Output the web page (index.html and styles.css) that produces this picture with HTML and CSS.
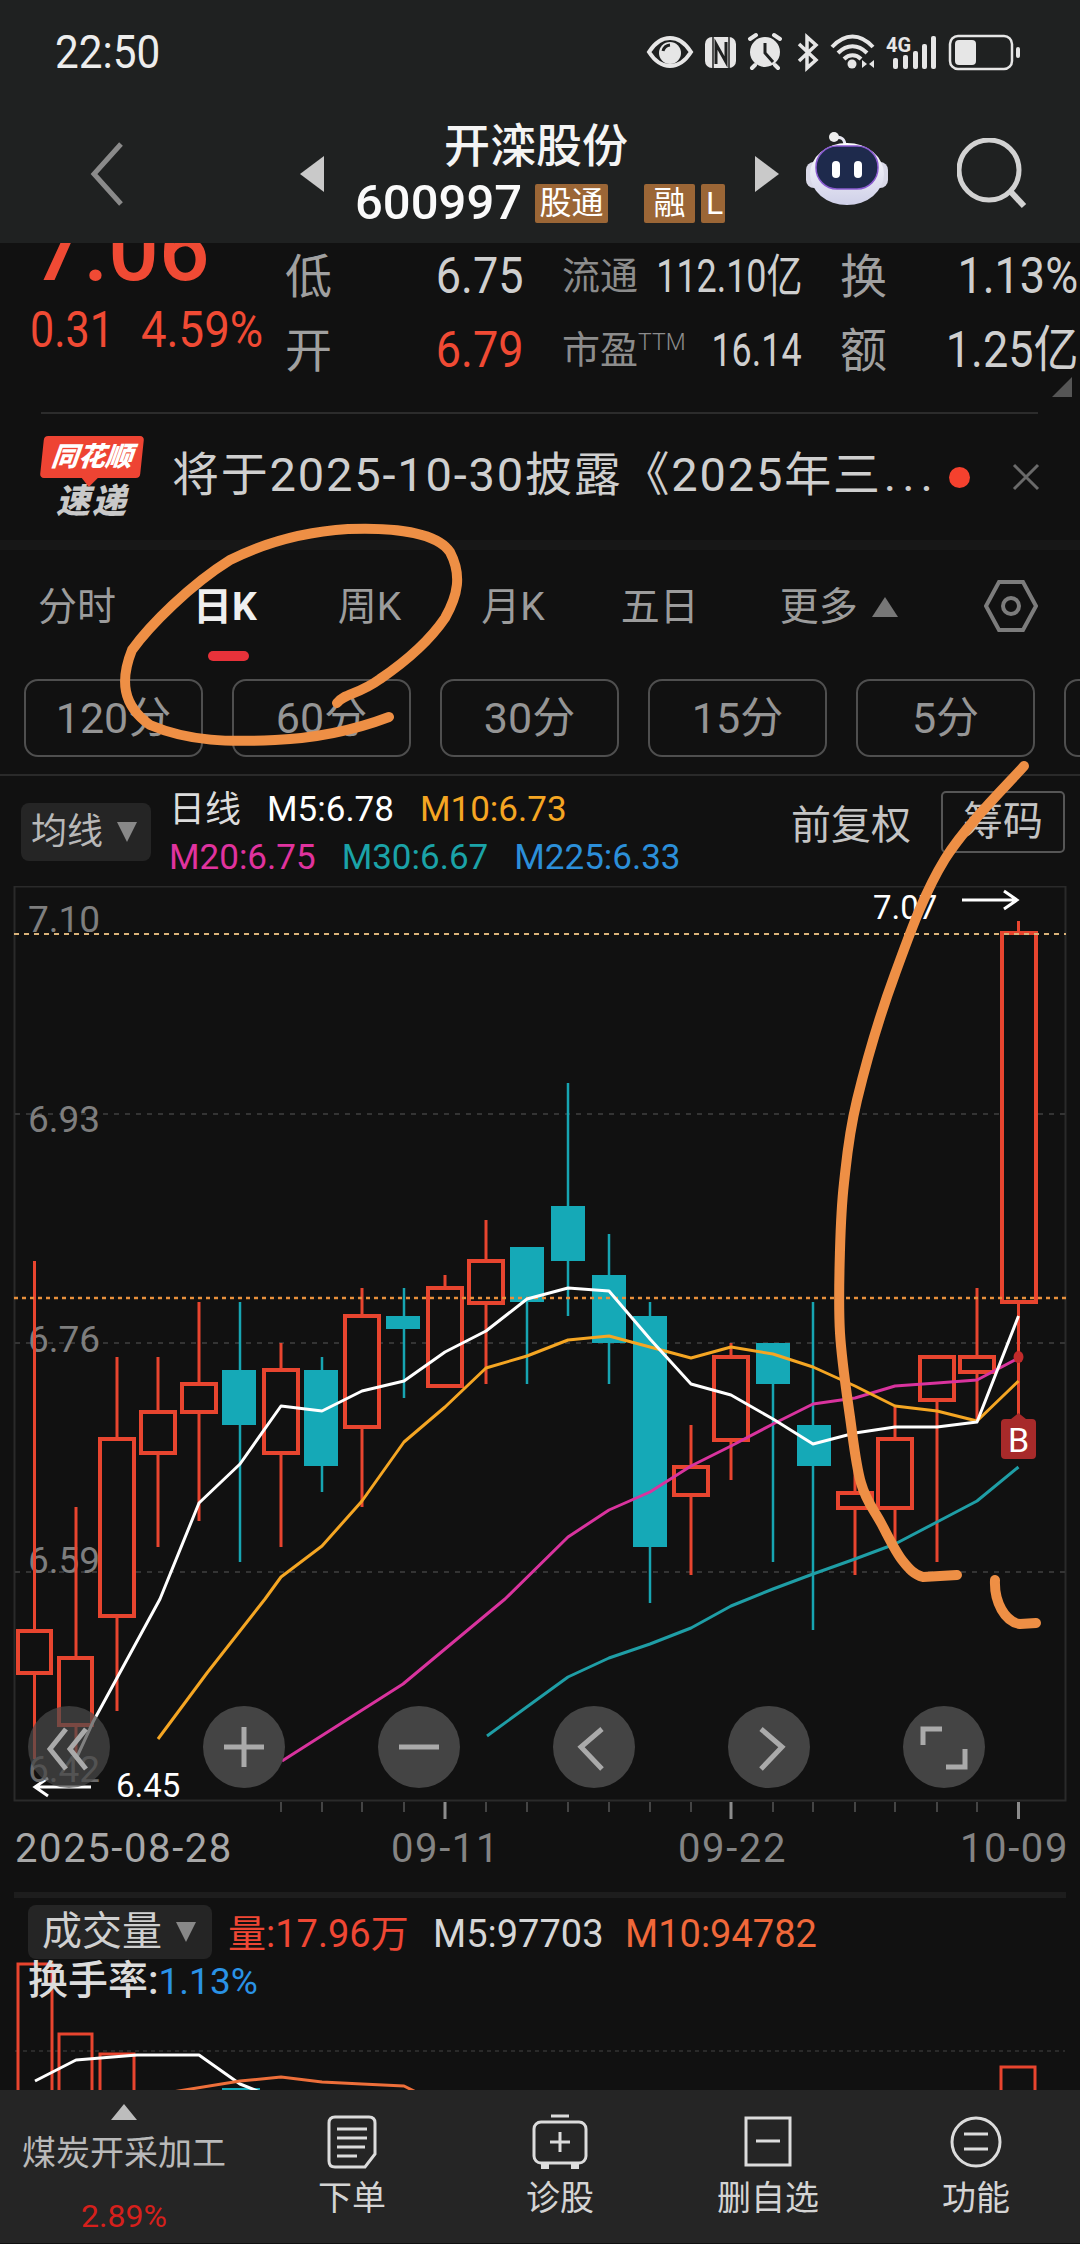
FILE: index.html
```html
<!DOCTYPE html>
<html lang="zh">
<head>
<meta charset="utf-8">
<title>开滦股份</title>
<link rel="stylesheet" href="styles.css">
</head>
<body>
<div class="page">
  <header class="top">
    <div class="status">
      <span class="time">22:50</span>
      <svg class="status-icons" width="390" height="44" viewBox="640 28 390 44">
        <g fill="none" stroke="#e6e6e6" stroke-width="4">
          <path d="M649 50 C656 39 664 36 670 36 C676 36 684 39 691 50 C684 61 676 64 670 64 C664 64 656 61 649 50Z"/>
          <path d="M799 42L816 58L807 66V35L816 43L799 59" stroke-width="3.5"/>
          <path d="M832 45C845 31 860 31 873 45M838 51C847 42 858 42 867 51M844 57C849 52 856 52 861 57" stroke-width="4"/>
          <rect x="950" y="34" width="62" height="33" rx="8" stroke-width="2.5"/>
          <path d="M750 37L756 33M780 37L774 33M755 63L752 66M775 63L778 66" stroke-width="4" stroke-linecap="round"/>
        </g>
        <g fill="#e6e6e6">
          <circle cx="670" cy="51" r="11"/>
          <rect x="705" y="35" width="31" height="31" rx="7"/>
          <circle cx="765" cy="50" r="15"/>
          <circle cx="852" cy="62" r="4.5"/>
          <path d="M862 58l5 4-5 4zM874 58l-5 4 5 4z"/>
          <text class="st-4g" x="886" y="50">4G</text>
          <rect x="893" y="56" width="5" height="11" rx="2"/>
          <rect x="903" y="53" width="5" height="14" rx="2"/>
          <rect x="913" y="49" width="5" height="18" rx="2"/>
          <rect x="922" y="42" width="5" height="25" rx="2"/>
          <rect x="931" y="34" width="5" height="33" rx="2"/>
          <rect x="955" y="38" width="21" height="25" rx="4"/>
          <rect x="1016" y="45" width="4" height="11" rx="2"/>
        </g>
        <g fill="none" stroke="#1f2121">
          <path d="M663 49A8 8 0 0 1 670 43" stroke-width="3"/>
          <path d="M716 62V42L726 60V40" stroke-width="3"/>
          <path d="M713 35V66M729 35V66" stroke-width="1.5"/>
          <path d="M765 41V51L773 60" stroke-width="3"/>
        </g>
      </svg>
    </div>
    <div class="titlebar">
      <svg class="back" width="40" height="66" viewBox="0 0 40 66"><path d="M33 3L6 33L33 63" fill="none" stroke="#8a8a8a" stroke-width="5"/></svg>
      <svg class="tri-l" width="24" height="36" viewBox="0 0 24 36"><path d="M24 0V36L0 18Z" fill="#c9c9c9"/></svg>
      <div class="title">
        <div class="name">开滦股份</div>
        <div class="code-row">
          <span class="code">600997</span>
          <span class="badge badge-gt">股通</span>
          <span class="badge badge-r">融</span>
          <span class="badge badge-l">L</span>
        </div>
      </div>
      <svg class="tri-r" width="24" height="36" viewBox="0 0 24 36"><path d="M0 0V36L24 18Z" fill="#c9c9c9"/></svg>
      <svg class="robot" width="84" height="74" viewBox="0 0 84 74">
        <defs><linearGradient id="rg" x1="0" y1="0" x2="0" y2="1"><stop offset="0" stop-color="#fff"/><stop offset="1" stop-color="#cfd0e8"/></linearGradient></defs>
        <path d="M30 6C36 4 40 7 40 14" fill="none" stroke="#e8e8f2" stroke-width="3"/>
        <circle cx="29" cy="5" r="5" fill="#eeeeee"/>
        <rect x="1" y="30" width="82" height="26" rx="8" fill="#d9d9e8"/>
        <ellipse cx="42" cy="42" rx="37" ry="31" fill="url(#rg)"/>
        <rect x="11" y="14" width="62" height="43" rx="21" fill="#1e2a4c" stroke="#8a5bd0" stroke-width="1.5"/>
        <rect x="27" y="29" width="8" height="17" rx="4" fill="#fff"/>
        <rect x="49" y="29" width="8" height="17" rx="4" fill="#fff"/>
      </svg>
      <svg class="search" width="72" height="72" viewBox="0 0 72 72"><circle cx="32" cy="32" r="30" fill="none" stroke="#d2d2d2" stroke-width="5"/><path d="M54 54L67 68" stroke="#d2d2d2" stroke-width="6"/></svg>
    </div>
  </header>

  <section class="quote">
    <div class="price-col">
      <div class="price">7.06</div>
      <div class="change"><span>0.31</span><span>4.59%</span></div>
    </div>
    <div class="qgrid">
      <span class="q-l">低</span><span class="q-v">6.75</span>
      <span class="q-m">流通</span><span class="q-n">112.10亿</span>
      <span class="q-l q-l2">换</span><span class="q-v">1.13%</span>
      <span class="q-l">开</span><span class="q-v q-red">6.79</span>
      <span class="q-m">市盈<sup class="ttm">TTM</sup></span><span class="q-n">16.14</span>
      <span class="q-l q-l2">额</span><span class="q-v">1.25亿</span>
    </div>
    <div class="corner"></div>
  </section>
  <div class="rule"></div>

  <section class="news">
    <div class="logo">
      <div class="logo-top"><span>同花顺</span></div>
      <div class="logo-bot">速递</div>
    </div>
    <div class="news-text">将于2025-10-30披露《2025年三<span class="ell">...</span></div>
    <span class="dot"></span>
    <svg class="close" width="28" height="28" viewBox="0 0 28 28"><path d="M2 2L26 26M26 2L2 26" stroke="#6a6a6a" stroke-width="3"/></svg>
  </section>
  <div class="band"></div>

  <nav class="tabs">
    <span class="tab">分时</span>
    <span class="tab tab-on">日K</span>
    <span class="tab tab-w">周K</span>
    <span class="tab tab-m">月K</span>
    <span class="tab tab-wide">五日</span>
    <span class="tab tab-more">更多<i class="tri-up"></i></span>
    <svg class="hex" width="54" height="54" viewBox="0 0 54 54"><path d="M15 3H39L52 27L39 51H15L2 27Z" fill="none" stroke="#7c7c7c" stroke-width="4"/><circle cx="27" cy="27" r="8" fill="none" stroke="#7c7c7c" stroke-width="4"/></svg>
  </nav>
  <div class="subtabs">
    <span class="chip">120分</span>
    <span class="chip">60分</span>
    <span class="chip">30分</span>
    <span class="chip">15分</span>
    <span class="chip">5分</span>
    <span class="chip"></span>
  </div>

  <section class="legend">
    <div class="drop"><span>均线</span><i class="tri-down"></i></div>
    <div class="lg-lines">
      <div class="lg-row"><span class="lg-cn">日线</span><span class="c-w">M5:6.78</span><span class="c-y">M10:6.73</span></div>
      <div class="lg-row"><span class="c-m">M20:6.75</span><span class="c-t">M30:6.67</span><span class="c-b">M225:6.33</span></div>
    </div>
    <span class="fq">前复权</span>
    <span class="cm">筹码</span>
  </section>

  <svg class="chart" width="1080" height="1006" viewBox="0 887 1080 1006">
    <rect class="frame" x="14.5" y="887.5" width="1051" height="914"/>
    <path class="grid" d="M15 1115H1065M15 1344H1065M15 1573H1065"/>
    <text class="yl" x="28" y="933">7.10</text>
    <text class="yl" x="28" y="1133">6.93</text>
    <text class="yl" x="28" y="1353">6.76</text>
    <text class="yl" x="28" y="1574">6.59</text>

    <g class="wk-r">
      <path d="M34.5 1262V1760M76 1508V1760M117 1358V1712M158 1358V1548M199 1303V1522M281 1344V1548M362 1289V1508M445 1276V1288M486 1221V1385M691 1426V1576M731 1344V1481M855 1440V1576M895 1408V1548M937 1357V1563M977 1289V1422M1018.5 922V1440"/>
    </g>
    <g class="wk-g">
      <path d="M240 1303V1563M322 1358V1493M404 1289V1399M527 1303V1385M568 1084V1317M609 1235V1385M650 1303V1604M773 1385V1563M813 1303V1631"/>
    </g>
    <g class="bd-r">
      <rect x="18" y="1632" width="33" height="42"/>
      <rect x="59" y="1659" width="33" height="67"/>
      <rect x="100" y="1440" width="34" height="177"/>
      <rect x="141" y="1413" width="34" height="41"/>
      <rect x="182" y="1385" width="34" height="28"/>
      <rect x="264" y="1371" width="34" height="83"/>
      <rect x="345" y="1317" width="34" height="111"/>
      <rect x="428" y="1289" width="34" height="98"/>
      <rect x="469" y="1262" width="34" height="42"/>
      <rect x="674" y="1468" width="34" height="28"/>
      <rect x="714" y="1358" width="34" height="83"/>
      <rect x="838" y="1494" width="34" height="15"/>
      <rect x="878" y="1440" width="34" height="69"/>
      <rect x="920" y="1358" width="34" height="43"/>
      <rect x="960" y="1358" width="34" height="15"/>
      <rect x="1002" y="934" width="34" height="369"/>
    </g>
    <g class="bd-g">
      <rect x="222" y="1371" width="34" height="55"/>
      <rect x="304" y="1371" width="34" height="96"/>
      <rect x="386" y="1317" width="34" height="13"/>
      <rect x="510" y="1248" width="34" height="55"/>
      <rect x="551" y="1207" width="34" height="55"/>
      <rect x="592" y="1276" width="34" height="68"/>
      <rect x="633" y="1317" width="34" height="231"/>
      <rect x="756" y="1344" width="34" height="41"/>
      <rect x="797" y="1426" width="34" height="41"/>
    </g>

    <path class="dash-top" d="M14 935H1066"/>
    <path class="dash-now" d="M14 1299H1066"/>

    <polyline class="ln ln-t" points="487,1737 568,1678 609,1659 650,1645 691,1629 731,1607 773,1590 813,1575 855,1560 895,1545 937,1523 977,1502 1018.5,1468"/>
    <polyline class="ln ln-m" points="282,1762 403,1685 505,1600 568,1538 609,1511 650,1493 691,1467 731,1447 773,1425 813,1405 855,1399 895,1387 937,1384 977,1381 1018.5,1359"/>
    <polyline class="ln ln-y" points="158,1740 207,1674 265,1600 281,1578 322,1547 362,1502 404,1443 445,1408 486,1369 527,1357 568,1341 609,1337 650,1348 691,1359 731,1348 773,1355 813,1368 855,1387 895,1407 937,1412 977,1422 1018.5,1382"/>
    <polyline class="ln ln-w" points="76,1760 93,1723 160,1600 199,1504 240,1465 281,1407 322,1412 362,1392 404,1382 445,1353 486,1332 527,1300 568,1289 609,1292 650,1340 691,1385 731,1396 773,1420 813,1445 855,1434 895,1428 937,1428 977,1423 1018.5,1317"/>

    <ellipse class="mark" cx="1018.5" cy="1358" rx="5" ry="6"/>
    <path class="bmark" d="M1018.5 1414L1026 1420H1032Q1036 1420 1036 1424V1456Q1036 1460 1032 1460H1005Q1001 1460 1001 1456V1424Q1001 1420 1005 1420H1011Z"/>
    <text class="btxt" x="1018.5" y="1453">B</text>

    <text class="pv" x="873" y="920">7.07</text>
    <path class="arr" d="M962 901H1016M1004 892L1017 901L1004 910"/>
    <text class="pv pv-s" x="116" y="1798">6.45</text>
    <path class="arr" d="M91 1788H35M48 1779L35 1788L48 1797"/>
    <text class="yl yl-dim" x="28" y="1783">6.42</text>

    <circle class="cbtn" cx="69" cy="1748" r="41"/>
    <circle class="cbtn-s" cx="244" cy="1748" r="41"/>
    <circle class="cbtn-s" cx="419" cy="1748" r="41"/>
    <circle class="cbtn-s" cx="594" cy="1748" r="41"/>
    <circle class="cbtn-s" cx="769" cy="1748" r="41"/>
    <circle class="cbtn-s" cx="944" cy="1748" r="41"/>
    <path class="cicon" d="M66 1730L50 1750L66 1770M86 1730L70 1750L86 1770"/>
    <path class="cicon" d="M224 1748H264M244 1728V1768"/>
    <path class="cicon" d="M399 1748H439"/>
    <path class="cicon" d="M602 1730L581 1748L602 1770"/>
    <path class="cicon" d="M761 1730L782 1748L761 1770"/>
    <path class="cicon" d="M923 1746V1730H942M965 1750V1768H946"/>

    <path class="tick" d="M281 1803V1813M322 1803V1813M362 1803V1813M404 1803V1813M486 1803V1813M527 1803V1813M568 1803V1813M609 1803V1813M650 1803V1813M691 1803V1813M773 1803V1813M813 1803V1813M855 1803V1813M895 1803V1813M937 1803V1813M977 1803V1813"/>
    <path class="tick-l" d="M445 1803V1820M731 1803V1820M1018.5 1803V1820"/>
    <text class="xl" x="15" y="1863">2025-08-28</text>
    <text class="xl xl-g" x="391" y="1863">09-11</text>
    <text class="xl xl-g" x="678" y="1863">09-22</text>
    <text class="xl xl-g" x="960" y="1863">10-09</text>
  </svg>

  <section class="vol">
    <svg class="vol-bg" width="1080" height="198" viewBox="0 1893 1080 198">
      <rect class="vol-band" x="14" y="1893" width="1052" height="6"/>
      <path class="grid-v" d="M15 2052H1065"/>
      <path class="v-r" d="M18 2091V1965H52V2091M59 2091V2035H92V2091M100 2091V2055H134V2091M1001 2091V2068H1035V2091"/>
      <rect class="v-g" x="222" y="2089" width="38" height="2"/>
      <polyline class="ln ln-w" points="35,2082 76,2061 137,2056 199,2056 240,2085 265,2095"/>
      <polyline class="ln ln-o" points="160,2095 240,2082 281,2078 322,2083 362,2085 404,2087 420,2095"/>
    </svg>
    <div class="vol-head">
      <div class="drop drop-v"><span>成交量</span><i class="tri-down"></i></div>
      <span class="v-red">量:17.96万</span>
      <span class="v-wh">M5:97703</span>
      <span class="v-or">M10:94782</span>
    </div>
    <div class="vol-turn">换手率:<span class="v-blue">1.13%</span></div>
  </section>

  <footer class="bottom">
    <div class="sector">
      <i class="sec-tri"></i>
      <span class="sec-name">煤炭开采加工</span>
      <span class="sec-pct">2.89%</span>
    </div>
    <div class="act">
      <svg width="50" height="56" viewBox="0 0 50 56"><path d="M8 3H42Q48 3 48 9V40L38 53H8Q2 53 2 47V9Q2 3 8 3Z" fill="none" stroke="#dcdcdc" stroke-width="3"/><path d="M10 15H40M10 24H40M10 33H38M10 42H30" stroke="#dcdcdc" stroke-width="3"/></svg>
      <span>下单</span>
    </div>
    <div class="act">
      <svg width="56" height="56" viewBox="0 0 56 56"><path d="M19 2H37" stroke="#dcdcdc" stroke-width="3"/><rect x="2" y="8" width="52" height="41" rx="7" fill="none" stroke="#dcdcdc" stroke-width="3"/><path d="M28 18V38M18 28H38" stroke="#dcdcdc" stroke-width="3"/><path d="M9 49H17V55H9ZM39 49H47V55H39Z" fill="#dcdcdc"/></svg>
      <span>诊股</span>
    </div>
    <div class="act">
      <svg width="50" height="56" viewBox="0 0 50 56"><rect x="3" y="4" width="44" height="47" fill="none" stroke="#dcdcdc" stroke-width="3"/><path d="M13 27H37" stroke="#dcdcdc" stroke-width="3"/></svg>
      <span>删自选</span>
    </div>
    <div class="act">
      <svg width="54" height="56" viewBox="0 0 54 56"><circle cx="27" cy="28" r="24" fill="none" stroke="#dcdcdc" stroke-width="3"/><path d="M15 20H39M15 35H39" stroke="#dcdcdc" stroke-width="3"/></svg>
      <span>功能</span>
    </div>
  </footer>

  <svg class="scribble" width="1080" height="2244" viewBox="0 0 1080 2244">
    <path d="M337 703C345 693 358 695 380 679C405 662 430 640 445 618C458 595 462 575 450 552C438 534 400 527 348 529C300 532 260 545 230 560C190 585 150 625 132 650C120 680 122 705 150 725C190 742 230 742 275 740C320 738 360 728 389 717"/>
    <path d="M1024 766C1011 781 966.5 824 945 859C923.5 894 909.7 934 895 974C880.3 1014 865.5 1065 857 1100C848.5 1135 846.8 1158 844 1183C841.2 1208 840.7 1225 840 1250C839.3 1275 838.3 1305 840 1333C841.7 1361 846.5 1392 850 1417C853.5 1442 855.8 1465 861 1483C866 1501 874 1510 881 1523C888 1536 895 1551 902 1560C909 1569 914 1574.5 923 1577L957 1575"/>
    <path d="M995 1580C994 1602 1005 1622 1020 1624L1036 1623"/>
  </svg>
</div>
</body>
</html>
```
FILE: styles.css
```css
* { box-sizing: border-box; }
html, body { margin: 0; padding: 0; background: #111; }
body { font-family: Roboto, "Noto Sans CJK SC", sans-serif; }
.page { position: relative; width: 1080px; height: 2244px; overflow: hidden; background: #111; display: flex; flex-direction: column; }
i { display: block; font-style: normal; }
svg { display: block; flex: none; }

.top { flex: none; height: 243px; background: #1f2121; }
.status { height: 104px; display: flex; align-items: center; justify-content: space-between; padding: 0 50px 0 55px; }
.time { font-size: 46px; color: #ededed; line-height: 1; transform: scaleX(.92); transform-origin: left center; }
.st-4g { font-size: 20px; font-weight: 700; }
.titlebar { height: 139px; position: relative; }
.back { position: absolute; left: 88px; top: 37px; }
.tri-l { position: absolute; left: 300px; top: 52px; }
.tri-r { position: absolute; left: 755px; top: 52px; }
.robot { position: absolute; left: 805px; top: 28px; }
.search { position: absolute; left: 957px; top: 34px; }
.title { position: absolute; left: 355px; top: 12px; width: 370px; }
.name { font-size: 46px; line-height: 60px; font-weight: 500; color: #f4f4f4; text-align: center; padding-right: 8px; }
.code-row { display: flex; align-items: center; height: 46px; margin-top: 4px; }
.code { font-size: 49px; font-weight: 500; color: #fafafa; line-height: 58px; width: 180px; flex: none; }
.badge { background: #9b6636; color: #fff; font-size: 32px; line-height: 39px; height: 39px; border-radius: 2px; text-align: center; flex: none; }
.badge-gt { width: 73px; }
.badge-r { width: 51px; margin-left: 36px; }
.badge-l { width: 24px; margin-left: 6px; text-align: left; padding-left: 5px; }

.quote { flex: none; height: 169px; position: relative; overflow: hidden; display: flex; }
.price-col { width: 285px; flex: none; padding-left: 30px; }
.price { font-size: 89px; font-weight: 500; color: #f04a34; line-height: 72px; margin-top: -29px; padding-left: 3px; }
.change { display: flex; font-size: 50px; line-height: 48px; color: #f04a34; margin-top: 20px; }
.change span { transform: scaleX(.86); transform-origin: left center; white-space: nowrap; flex: none; }
.change span:first-child { width: 111px; }
.change span:last-child { transform: scaleX(.91); }
.qgrid { display: grid; grid-template-columns: 50px 188px 131px 148px 88px 188px; grid-template-rows: 74px 74px; align-items: center; margin-top: -4px; flex: none; }
.q-l { font-size: 47px; color: #a0a0a0; line-height: 1; }
.q-l2 { padding-left: 38px; white-space: nowrap; }
.q-v { font-size: 50px; color: #cfcfcf; text-align: right; line-height: 1; white-space: nowrap; justify-self: end; transform: scaleX(.9); transform-origin: right center; }
.q-red { color: #f04a34; }
.q-m { font-size: 38px; color: #8c8c8c; line-height: 1; white-space: nowrap; padding-left: 39px; }
.q-n { font-size: 46px; color: #cfcfcf; text-align: right; line-height: 1; white-space: nowrap; justify-self: end; transform: scaleX(.78); transform-origin: right center; }
.ttm { font-size: 23px; font-weight: 300; line-height: 0; vertical-align: 13px; }
.corner { position: absolute; right: 8px; bottom: 15px; width: 0; height: 0; border-left: 20px solid transparent; border-bottom: 20px solid #555; }
.rule { flex: none; height: 2px; margin: 0 42px 0 41px; background: #2c2c2c; }

.news { flex: none; height: 126px; display: flex; align-items: center; padding: 0 40px 0 42px; }
.logo { width: 100px; flex: none; margin-right: 30px; margin-top: 2px; }
.logo-top { height: 42px; background: #ee4433; border-radius: 4px; transform: skewX(-6deg); color: #fff; font-size: 27px; font-weight: 900; line-height: 42px; text-align: center; position: relative; }
.logo-top span { display: block; font-style: italic; }
.logo-top::after { content: ""; position: absolute; left: 42px; bottom: -9px; border-left: 8px solid transparent; border-right: 8px solid transparent; border-top: 9px solid #ee4433; }
.logo-bot { font-size: 34px; font-weight: 900; font-style: italic; color: #c9c9c9; line-height: 38px; text-align: center; margin-top: 4px; letter-spacing: 2px; }
.news-text { flex: 1; font-size: 47px; color: #cfcfcf; white-space: nowrap; line-height: 1; letter-spacing: 1.8px; margin-top: -6px; }
.ell { letter-spacing: 6px; margin-left: 2px; }
.dot { width: 21px; height: 21px; border-radius: 50%; background: #f5412e; flex: none; margin-right: 42px; }
.close { flex: none; }
.band { flex: none; height: 10px; background: #171717; }

.tabs { flex: none; height: 119px; display: flex; align-items: flex-start; padding: 26px 0 0 38px; position: relative; }
.tab { font-size: 39px; line-height: 62px; color: #9c9c9c; margin-right: 77px; white-space: nowrap; }
.tab-on { color: #efefef; font-weight: 700; position: relative; margin-right: 81px; }
.tab-on::after { content: ""; position: absolute; left: 15px; top: 75px; width: 41px; height: 10px; border-radius: 5px; background: #e8323a; }
.tab-w { margin-right: 80px; }
.tab-m { margin-right: 76px; }
.tab-wide { margin-right: 81px; }
.tab-more { display: flex; align-items: center; gap: 14px; margin-right: 0; }
.tri-up { width: 0; height: 0; border-left: 13px solid transparent; border-right: 13px solid transparent; border-bottom: 20px solid #777; }
.hex { position: absolute; left: 984px; top: 29px; }

.subtabs { flex: none; height: 107px; display: flex; gap: 29px; padding: 10px 0 0 24px; overflow: hidden; align-items: flex-start; border-bottom: 2px solid #2a2a2a; }
.chip { flex: none; width: 179px; height: 78px; border: 2px solid #4f4f4f; border-radius: 14px; font-size: 43px; line-height: 74px; text-align: center; color: #959595; }

.legend { flex: none; height: 110px; display: flex; align-items: flex-start; padding-left: 21px; color: #ddd; }
.drop { display: flex; align-items: center; gap: 14px; background: #252525; border-radius: 8px; color: #b8b8b8; }
.drop span { line-height: 1; }
.legend .drop { width: 130px; height: 58px; margin-top: 27px; padding-left: 10px; font-size: 36px; flex: none; }
.tri-down { width: 0; height: 0; border-left: 10px solid transparent; border-right: 10px solid transparent; border-top: 20px solid #888; }
.lg-lines { margin-left: 18px; width: 622px; flex: none; padding-top: 10px; }
.lg-row { display: flex; gap: 26px; font-size: 35px; line-height: 48px; white-space: nowrap; }
.lg-cn { font-size: 36px; color: #dcdcdc; }
.c-w { color: #fff; }
.c-y { color: #f5a623; }
.c-m { color: #e0339f; }
.c-t { color: #1ba3a8; }
.c-b { color: #2c8fd9; }
.fq { font-size: 40px; color: #c4c4c4; line-height: 1; margin-top: 30px; flex: none; width: 150px; }
.cm { width: 124px; height: 62px; flex: none; margin-top: 15px; border: 2px solid #565656; border-radius: 5px; font-size: 40px; line-height: 58px; text-align: center; color: #c4c4c4; }

.chart { flex: none; }
.frame { fill: none; stroke: #2a2a2a; stroke-width: 2; }
.grid { stroke: #343434; stroke-width: 2; stroke-dasharray: 5 6; fill: none; }
.yl { font-size: 37px; fill: #7e7e7e; font-family: Roboto, sans-serif; }
.yl-dim { fill: #6a6a6a; }
.wk-r { stroke: #e8452f; stroke-width: 3; fill: none; }
.wk-g { stroke: #17a5b2; stroke-width: 2.5; fill: none; }
.bd-r rect { fill: #111; stroke: #e8452f; stroke-width: 4; }
.bd-g rect { fill: #15a9b7; }
.dash-top { stroke: #d9b27a; stroke-width: 2; stroke-dasharray: 5 5; fill: none; }
.dash-now { stroke: #e8903c; stroke-width: 2.5; stroke-dasharray: 4 4; fill: none; }
.ln { fill: none; stroke-linejoin: round; }
.ln-w { stroke: #fff; stroke-width: 3; }
.ln-y { stroke: #f5a623; stroke-width: 3; }
.ln-m { stroke: #d9339e; stroke-width: 3; }
.ln-t { stroke: #1f9ea6; stroke-width: 3; }
.ln-o { stroke: #ee6f3a; stroke-width: 3; }
.mark { fill: #c22b2b; }
.bmark { fill: #a72a2a; }
.btxt { font-size: 34px; fill: #fff; text-anchor: middle; font-family: Roboto, sans-serif; }
.pv { font-size: 33px; fill: #fff; font-family: Roboto, sans-serif; }
.arr { fill: none; stroke: #fff; stroke-width: 3; }
.cbtn { fill: #4a4a4a; fill-opacity: .7; }
.cbtn-s { fill: #444; }
.cicon { fill: none; stroke: #aaa; stroke-width: 5; }
.tick { stroke: #444; stroke-width: 2; }
.tick-l { stroke: #8c8c8c; stroke-width: 3; }
.xl { font-size: 40px; letter-spacing: 1.6px; fill: #a8a8a8; font-family: Roboto, sans-serif; }
.xl-g { fill: #848484; }

.vol { flex: none; height: 198px; position: relative; overflow: hidden; }
.vol-bg { position: absolute; left: 0; top: 0; }
.vol-band { fill: #1d1d1d; }
.grid-v { stroke: #333; stroke-width: 1.5; stroke-dasharray: 4 4; fill: none; }
.v-r { fill: none; stroke: #e8452f; stroke-width: 3; }
.v-g { fill: #15a9b7; }
.vol-head { position: relative; display: flex; align-items: center; padding: 13px 0 0 28px; height: 67px; font-size: 38px; white-space: nowrap; }
.drop-v { width: 184px; height: 54px; padding-left: 14px; font-size: 40px; margin-right: 16px; flex: none; color: #d0d0d0; }
.v-red { color: #ef4734; width: 205px; flex: none; line-height: 1; margin-top: 4px; }
.v-wh { color: #d6d6d6; width: 192px; flex: none; line-height: 1; margin-top: 4px; }
.v-or { color: #f0683a; flex: none; line-height: 1; margin-top: 4px; }
.vol-turn { position: relative; padding: 0 0 0 28px; font-size: 40px; color: #dcdcdc; line-height: 44px; font-weight: 500; }
.v-blue { color: #2a93e6; font-weight: 400; font-size: 37px; }

.bottom { flex: none; height: 153px; background: #252525; display: grid; grid-template-columns: 248px repeat(4, 208px); position: relative; }
.sector { position: relative; display: flex; flex-direction: column; align-items: center; }
.sec-tri { width: 0; height: 0; margin-top: 14px; border-left: 13px solid transparent; border-right: 13px solid transparent; border-bottom: 16px solid #bdbdbd; }
.sec-name { font-size: 34px; color: #b9b9b9; line-height: 40px; margin-top: 13px; white-space: nowrap; }
.sec-pct { font-size: 32px; color: #d6201c; line-height: 40px; margin-top: 23px; }
.act { display: flex; flex-direction: column; align-items: center; padding-top: 24px; color: #d4d4d4; font-size: 34px; }
.act span { line-height: 42px; margin-top: 7px; }

.scribble { position: absolute; left: 0; top: 0; pointer-events: none; }
.scribble path { fill: none; stroke: #ee8f45; stroke-width: 10; stroke-linecap: round; stroke-linejoin: round; }
```
